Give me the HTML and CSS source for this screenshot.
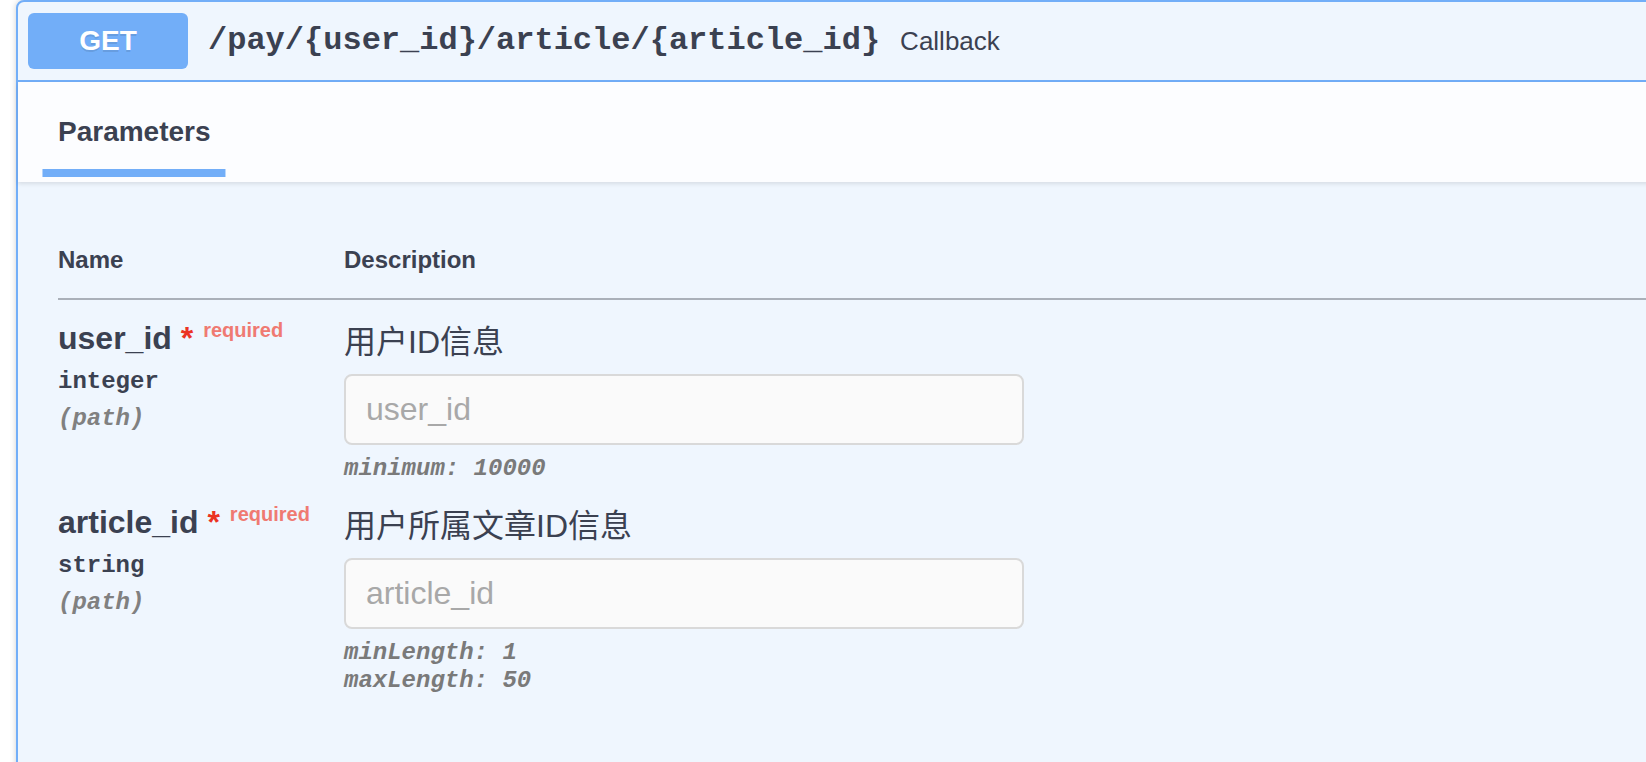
FILE: index.html
```html
<!DOCTYPE html>
<html lang="zh">
<head>
<meta charset="utf-8">
<title>GET /pay/{user_id}/article/{article_id}</title>
<link rel="stylesheet" href="styles.css">
</head>
<body>
<div class="page">
  <div class="opblock">
    <div class="summary">
      <span class="method">GET</span>
      <span class="path">/pay/{user_id}/article/{article_id}</span>
      <span class="summary-desc">Callback</span>
    </div>
    <div class="section-header">
      <h4 class="tab"><span class="tab-label">Parameters</span></h4>
    </div>
    <div class="table-container">
      <div class="params-head">
        <div class="th">Name</div>
        <div class="th">Description</div>
      </div>
      <div class="param-row">
        <div class="col-name">
          <div class="param-name">user_id<span class="star">&nbsp;*</span><span class="req">required</span></div>
          <div class="param-type">integer</div>
          <div class="param-in">(path)</div>
        </div>
        <div class="col-desc">
          <p class="md">用户ID信息</p>
          <input class="param-input" type="text" placeholder="user_id" readonly>
          <div class="constraints">
            <div>minimum: 10000</div>
          </div>
        </div>
      </div>
      <div class="param-row">
        <div class="col-name">
          <div class="param-name">article_id<span class="star">&nbsp;*</span><span class="req">required</span></div>
          <div class="param-type">string</div>
          <div class="param-in">(path)</div>
        </div>
        <div class="col-desc">
          <p class="md">用户所属文章ID信息</p>
          <input class="param-input" type="text" placeholder="article_id" readonly>
          <div class="constraints">
            <div>minLength: 1</div>
            <div>maxLength: 50</div>
          </div>
        </div>
      </div>
    </div>
  </div>
</div>
</body>
</html>
```

FILE: styles.css
```css
html, body {
  margin: 0;
  padding: 0;
  overflow: hidden;
  background: #ffffff;
}

.page {
  padding: 0 0 0 16px;
}

.opblock {
  margin-right: -60px;
  min-height: 900px;
  border: 2px solid #72aef8;
  border-radius: 8px;
  background: #eff6fe;
  box-shadow: 0 0 6px rgba(0, 0, 0, 0.19);
  color: #3b4151;
  font-family: "Liberation Sans", "Noto Sans CJK SC", sans-serif;
}

.summary {
  display: flex;
  align-items: center;
  min-height: 58px;
  padding: 10px;
  border-bottom: 2px solid #72aef8;
}

.method {
  min-width: 160px;
  padding: 12px 0;
  border-radius: 6px;
  background: #72aef8;
  color: #ffffff;
  font: 700 28px/32px "Liberation Sans", sans-serif;
  text-align: center;
  text-shadow: 0 2px 0 rgba(0, 0, 0, 0.1);
}

.path {
  padding: 0 20px;
  font: 700 32px/36px "Liberation Mono", monospace;
  color: #3b4151;
}

.summary-desc {
  font: 26px/30px "Liberation Sans", sans-serif;
  color: #3b4151;
}

.section-header {
  display: flex;
  align-items: center;
  box-sizing: border-box;
  min-height: 100px;
  padding: 16px 40px;
  background: rgba(255, 255, 255, 0.8);
  box-shadow: 0 2px 4px rgba(0, 0, 0, 0.1);
}

.tab {
  margin: 0;
  font: 700 28px/32px "Liberation Sans", sans-serif;
  color: #3b4151;
}

.tab-label {
  position: relative;
}

.tab-label::after {
  content: "";
  position: absolute;
  left: 50%;
  bottom: -30px;
  width: 120%;
  height: 8px;
  transform: translateX(-50%);
  background: #72aef8;
}

.table-container {
  padding: 40px 40px 120px;
}

.params-head {
  display: grid;
  grid-template-columns: 286px 1fr;
  border-bottom: 2px solid #aab0b9;
}

.th {
  padding: 24px 0;
  font: 700 24px/28px "Liberation Sans", sans-serif;
  color: #3b4151;
}

.param-row {
  display: grid;
  grid-template-columns: 286px 1fr;
}

.col-name {
  padding: 20px 0;
}

.col-desc {
  padding-top: 20px;
}

.param-name {
  font: 700 32px/37px "Liberation Sans", sans-serif;
  color: #3b4151;
  white-space: nowrap;
}

.star {
  color: #eb3323;
}

.req {
  position: relative;
  top: -12px;
  padding: 0 10px;
  font-size: 20px;
  color: #ef7a72;
}

.param-type {
  padding: 7px 0 10px;
  font: 700 24px/27px "Liberation Mono", monospace;
  color: #3b4151;
}

.param-in {
  font: italic 700 24px/27px "Liberation Mono", monospace;
  color: #808080;
}

.md {
  margin: 0;
  font: 32px/44px "Liberation Sans", "Noto Sans CJK SC", sans-serif;
  color: #3b4151;
}

.param-input {
  display: block;
  box-sizing: border-box;
  width: 680px;
  height: 71px;
  margin: 10px 0;
  padding: 0 20px;
  border: 2px solid #d9d9d9;
  border-radius: 8px;
  background: #fafafa;
  font: 32px "Liberation Sans", sans-serif;
  color: #3b4151;
  outline: none;
}

.param-input::placeholder {
  color: #a8a8a8;
}

.constraints {
  font: italic 700 24px/28.5px "Liberation Mono", monospace;
  color: #7a7a7a;
}
```
